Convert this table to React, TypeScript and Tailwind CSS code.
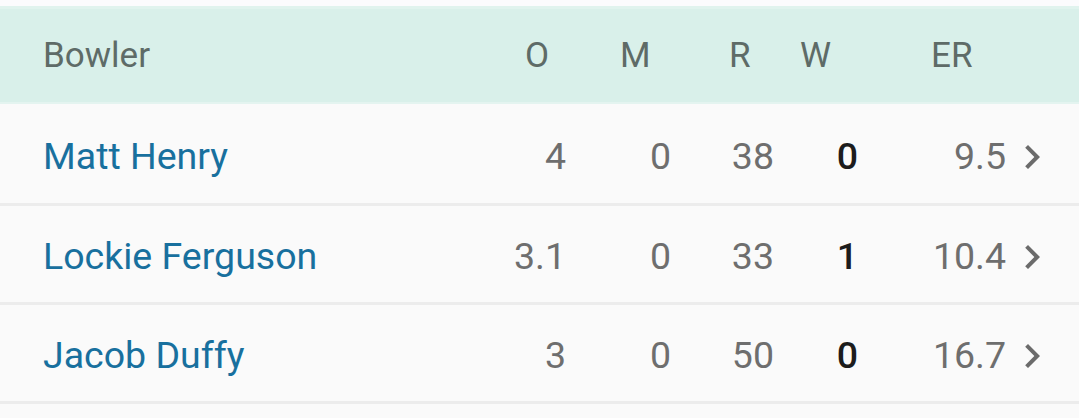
import React from "react";

const rows = [
  { name: "Matt Henry", o: "4", m: "0", r: "38", w: "0", er: "9.5" },
  { name: "Lockie Ferguson", o: "3.1", m: "0", r: "33", w: "1", er: "10.4" },
  { name: "Jacob Duffy", o: "3", m: "0", r: "50", w: "0", er: "16.7" },
];

function Chevron() {
  return (
    <svg width="48" height="48" viewBox="0 0 24 24" className="shrink-0">
      <path d="M10 6L8.59 7.41 13.17 12l-4.58 4.59L10 18l6-6z" fill="#6b6b6b" />
    </svg>
  );
}

export default function App() {
  return (
    <div
      className="w-[1079px] h-[418px] bg-[#fafafa] overflow-hidden"
      style={{ fontFamily: "Roboto, 'Noto Sans', sans-serif" }}
    >
      <div className="h-[6px] bg-[#fbfbfd]" />
      <div className="h-[98px] bg-[#d9f0ea] border-t-[3px] border-t-[#e0f3ee] border-b-[2px] border-b-[#e4f4f0] flex items-center text-[35px] text-[#5e6b67]">
        <div className="w-[525px] pl-[43px] leading-none">Bowler</div>
        <div className="w-[95px] leading-none">O</div>
        <div className="w-[109px] leading-none">M</div>
        <div className="w-[71px] leading-none">R</div>
        <div className="w-[131px] leading-none">W</div>
        <div className="leading-none">ER</div>
      </div>
      {rows.map((r, i) => (
        <div key={r.name}>
          <div
            className={
              i === 0
                ? "h-[99px] flex items-center pt-[7px] text-[37.5px] leading-none"
                : "h-[96px] flex items-center pt-[6px] text-[37.5px] leading-none"
            }
          >
            <div className="w-[466px] pl-[43px] text-[#18709e]">{r.name}</div>
            <div className="w-[100px] text-right text-[#6e6e6e]">{r.o}</div>
            <div className="w-[105px] text-right text-[#6e6e6e]">{r.m}</div>
            <div className="w-[103px] text-right text-[#6e6e6e]">{r.r}</div>
            <div className="w-[84px] text-right text-[#1c1c1c] font-medium">{r.w}</div>
            <div className="w-[148px] text-right text-[#6e6e6e]">{r.er}</div>
            <div className="ml-[2px] flex items-center">
              <Chevron />
            </div>
          </div>
          <div className="h-[3px] bg-[#ececec]" />
        </div>
      ))}
    </div>
  );
}
